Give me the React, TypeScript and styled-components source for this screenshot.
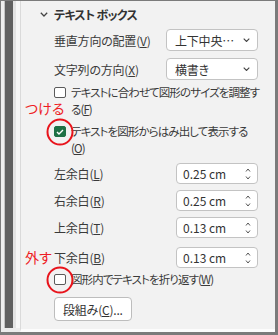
import React from 'react';
import styled, { createGlobalStyle } from 'styled-components';

const GlobalStyle = createGlobalStyle`
    body {
        margin: 0;
        background: #ffffff;
        font-family: "Noto Sans CJK JP", "Noto Sans", sans-serif;
        font-feature-settings: "palt";
    }
`;

const Frame = styled.div`
    width: 278px;
    height: 335px;
    box-sizing: border-box;
    border: 1px solid #7b7b7b;
    border-right-width: 3px;
    border-bottom-width: 3px;
    display: flex;
    background: #ececec;
`;

const Rail = styled.div`
    flex: 0 0 19px;
    display: flex;
    padding-bottom: 4px;
`;

const Stripe = styled.div<{ $w: number; $c: string }>`
    flex: 0 0 ${p => p.$w}px;
    background: ${p => p.$c};
`;

const Panel = styled.div`
    flex: 1;
    min-width: 0;
    display: flex;
    flex-direction: column;
    background: #f2f2f2;
    border-left: 1px solid #dadada;
    border-bottom: 3px solid #fcfcfc;
    padding: 5px 17px 0 19px;
    color: #3a3a3a;
    font-size: 12px;
    letter-spacing: -0.2px;
`;

const Heading = styled.div`
    display: flex;
    align-items: center;
    gap: 6px;
    height: 17px;
    font-weight: 700;
    color: #333;
    letter-spacing: -0.7px;
`;

const Body = styled.div`
    display: flex;
    flex-direction: column;
    padding-left: 14px;
    min-width: 0;
`;

const FieldRow = styled.div<{ $top: number }>`
    position: relative;
    display: flex;
    align-items: center;
    justify-content: space-between;
    margin-top: ${p => p.$top}px;
`;

const Label = styled.span`
    white-space: nowrap;
    line-height: 17px;
`;

const Select = styled.div`
    box-sizing: border-box;
    width: 92px;
    height: 22px;
    display: flex;
    align-items: center;
    justify-content: space-between;
    padding: 0 7px 0 8px;
    background: #fff;
    border: 1px solid #c3c3c3;
    border-radius: 4px;
    color: #333;
`;

const Spin = styled.div`
    box-sizing: border-box;
    width: 82px;
    height: 21px;
    display: flex;
    align-items: center;
    justify-content: space-between;
    padding: 0 6px 0 6px;
    background: #fff;
    border: 1px solid #c3c3c3;
    border-radius: 4px;
    color: #333;
    letter-spacing: 0;
`;

const Arrows = styled.div`
    display: flex;
    flex-direction: column;
    gap: 4px;
`;

const CheckRow = styled.div<{ $top: number }>`
    position: relative;
    display: flex;
    align-items: flex-start;
    gap: 5px;
    margin-top: ${p => p.$top}px;
    line-height: 17px;
    white-space: nowrap;
`;

const CheckText = styled.span`
    font-size: 11.5px;
    letter-spacing: -0.9px;
`;

const Box = styled.span<{ $checked?: boolean; $ringed?: boolean }>`
    position: relative;
    flex: 0 0 auto;
    box-sizing: border-box;
    width: 12px;
    height: 11px;
    margin-top: 3px;
    border: 1px solid ${p => (p.$checked ? '#1e7145' : '#5a5a5a')};
    border-radius: 2px;
    background: ${p => (p.$checked ? '#1e7145' : '#fff')};
    display: flex;
    align-items: center;
    justify-content: center;

    &::after {
        content: '';
        display: ${p => (p.$ringed ? 'block' : 'none')};
        position: absolute;
        left: 50%;
        top: 50%;
        width: 23px;
        height: 23px;
        transform: translate(-50%, -50%);
        border: 2px solid #e8141c;
        border-radius: 50%;
    }
`;

const Note = styled.span<{ $left: number; $top: number }>`
    position: absolute;
    left: ${p => p.$left}px;
    top: ${p => p.$top}px;
    color: #ee1c25;
    font-size: 14px;
    line-height: 16px;
    letter-spacing: 0;
    white-space: nowrap;
`;

const Button = styled.div`
    align-self: flex-start;
    box-sizing: border-box;
    height: 24px;
    margin-top: 9px;
    padding: 0 8px;
    display: flex;
    align-items: center;
    background: #fff;
    border: 1px solid #bdbdbd;
    border-radius: 4px;
    color: #333;
`;

const Chevron = ({ size = 8 }: { size?: number }) => (
    <svg width={size} height={size * 0.6} viewBox="0 0 10 6">
        <path d="M1 1 L5 5 L9 1" fill="none" stroke="#444" strokeWidth="1.6" />
    </svg>
);

const Caret = ({ up }: { up?: boolean }) => (
    <svg width="6" height="4" viewBox="0 0 6 4">
        <path d={up ? 'M1 3.5 L3 1 L5 3.5' : 'M1 0.5 L3 3 L5 0.5'} fill="none" stroke="#555" strokeWidth="1" />
    </svg>
);

const margins = [
    { label: '左余白', key: 'L', value: '0.25 cm', top: 6 },
    { label: '右余白', key: 'R', value: '0.25 cm', top: 6 },
    { label: '上余白', key: 'T', value: '0.13 cm', top: 6 },
    { label: '下余白', key: 'B', value: '0.13 cm', top: 9 },
];

const App = () => {
    return (
        <>
            <GlobalStyle />
            <Frame>
                <Rail>
                    <Stripe $w={3} $c="#eeeeee" />
                    <Stripe $w={1} $c="#c4c4c4" />
                    <Stripe $w={8} $c="#616161" />
                    <Stripe $w={3} $c="#e4e4e4" />
                    <Stripe $w={4} $c="#f7f7f7" />
                </Rail>
                <Panel>
                    <Heading>
                        <Chevron size={8} />
                        テキスト ボックス
                    </Heading>
                    <Body>
                        <FieldRow $top={6}>
                            <Label>垂直方向の配置(<u>V</u>)</Label>
                            <Select>
                                上下中央…
                                <Chevron size={7} />
                            </Select>
                        </FieldRow>
                        <FieldRow $top={7}>
                            <Label>文字列の方向(<u>X</u>)</Label>
                            <Select>
                                横書き
                                <Chevron size={7} />
                            </Select>
                        </FieldRow>
                        <CheckRow $top={4}>
                            <Box />
                            <CheckText>
                                テキストに合わせて図形のサイズを調整す
                                <br />
                                る(<u>F</u>)
                            </CheckText>
                        </CheckRow>
                        <CheckRow $top={5}>
                            <Note $left={-29} $top={-23}>つける</Note>
                            <Box $checked $ringed>
                                <svg width="8" height="6" viewBox="0 0 8 6">
                                    <path d="M1 3 L3 5 L7 1" fill="none" stroke="#fff" strokeWidth="1.4" />
                                </svg>
                            </Box>
                            <CheckText>
                                テキストを図形からはみ出して表示する
                                <br />
                                (<u>O</u>)
                            </CheckText>
                        </CheckRow>
                        {margins.map(m => (
                            <FieldRow $top={m.top} key={m.key}>
                                {m.key === 'B' && <Note $left={-29} $top={2}>外す</Note>}
                                <Label>{m.label}(<u>{m.key}</u>)</Label>
                                <Spin>
                                    {m.value}
                                    <Arrows>
                                        <Caret up />
                                        <Caret />
                                    </Arrows>
                                </Spin>
                            </FieldRow>
                        ))}
                        <CheckRow $top={3}>
                            <Box $ringed />
                            <CheckText>図形内でテキストを折り返す(<u>W</u>)</CheckText>
                        </CheckRow>
                        <Button>段組み(<u>C</u>)...</Button>
                    </Body>
                </Panel>
            </Frame>
        </>
    );
};

export default App;
